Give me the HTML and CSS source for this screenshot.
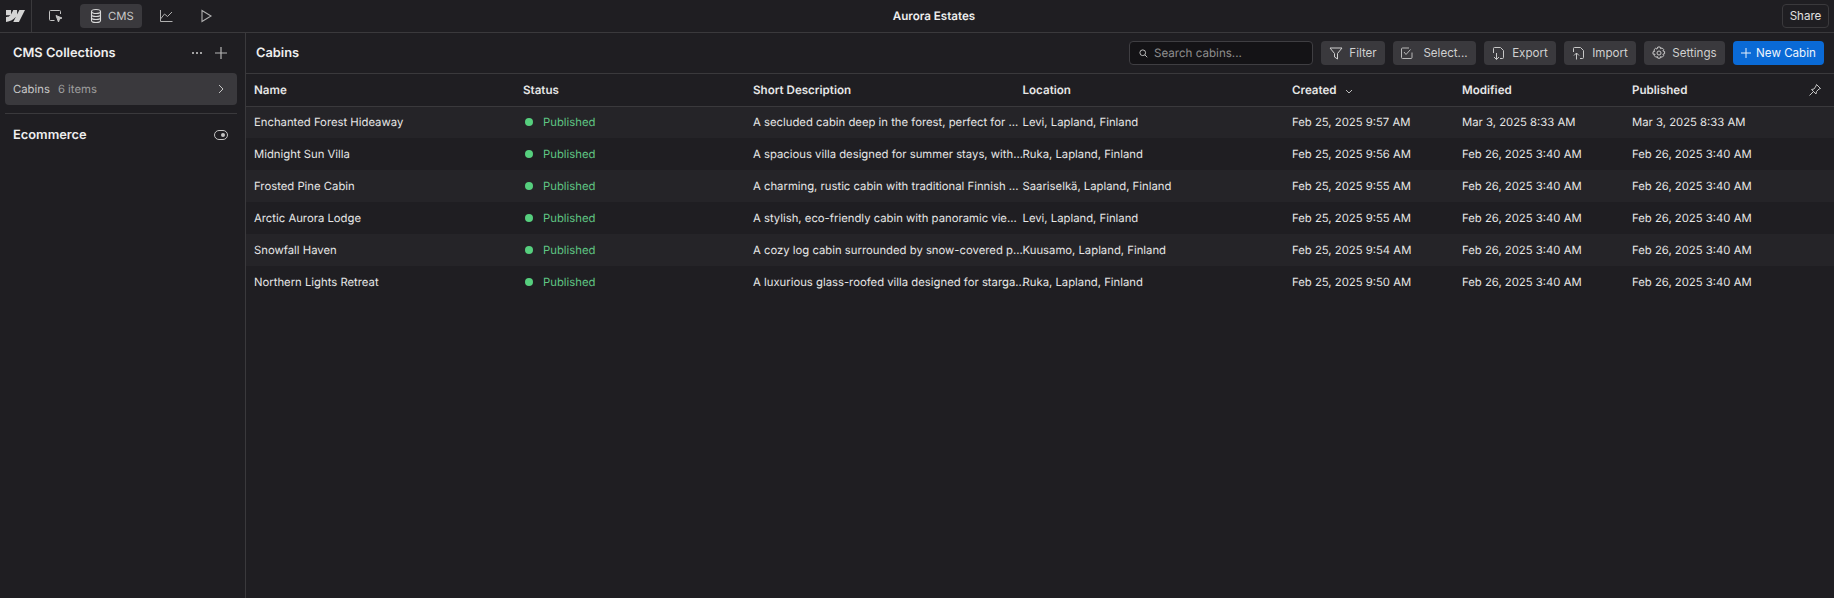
FILE: index.html
```html
<!DOCTYPE html>
<html lang="en">
<head>
<meta charset="utf-8">
<title>Aurora Estates</title>
<link rel="stylesheet" href="styles.css">
</head>
<body>
<header class="topbar">
  <div class="logo-cell">
    <svg class="logo" viewBox="0 0 1080 675" width="19" height="12"><path d="M1080 0 735.200 674.300H411.400l144.300-279.400h-6.500C430.200 549.500 252.700 651.300 0 674.300V398.700s161.700-9.600 256.800-109.500H0V0h288.500v237.300h6.500L412.900 0h218.200v235.800h6.500L760 0z" fill="#d4d4d4"/></svg>
  </div>
  <nav class="topnav">
    <span class="nav-icon"><svg viewBox="0 0 16 16" width="16" height="16" fill="none" stroke="#c4c4c4" stroke-width="1"><path d="M6.500 12.500H2.500a1 1 0 0 1-1-1v-8a1 1 0 0 1 1-1h9a1 1 0 0 1 1 1V6"/><path d="M8 7.500l6 2.500-2.500 1-1 3z" fill="#c4c4c4"/></svg></span>
    <span class="nav-item active"><svg viewBox="0 0 12 16" width="12" height="16" fill="none" stroke="#d9d9d9" stroke-width="1.100"><ellipse cx="6" cy="3.500" rx="4.500" ry="2"/><path d="M1.500 3.500v9c0 1.100 2 2 4.500 2s4.500-.9 4.500-2v-9M1.500 6.500c0 1.100 2 2 4.500 2s4.500-.9 4.500-2M1.500 9.500c0 1.100 2 2 4.500 2s4.500-.9 4.500-2"/></svg>CMS</span>
    <span class="nav-icon"><svg viewBox="0 0 16 16" width="16" height="16" fill="none" stroke="#b0b0b0" stroke-width="1"><path d="M2.500 2v11.500H14.500M2.500 11l4-5 3 2.500L14 4"/></svg></span>
    <span class="nav-icon"><svg viewBox="0 0 16 16" width="16" height="16" fill="none" stroke="#b0b0b0" stroke-width="1.100"><path d="M4 2.500v11l9-5.500z"/></svg></span>
  </nav>
  <div class="site-title">Aurora Estates</div>
  <button class="share">Share</button>
</header>
<div class="workspace">
  <aside class="sidebar">
    <div class="side-head">
      <h2>CMS Collections</h2>
      <svg class="dots" viewBox="0 0 12 4" width="12" height="4" fill="#cfcfcf"><circle cx="2" cy="2" r="1"/><circle cx="6" cy="2" r="1"/><circle cx="10" cy="2" r="1"/></svg>
      <svg class="plus" viewBox="0 0 12 12" width="12" height="12" stroke="#b5b5b5" stroke-width="1.200"><path d="M6 0v12M0 6h12"/></svg>
    </div>
    <div class="collection">
      <span class="coll-name">Cabins</span><span class="coll-count">6 items</span>
      <svg class="chev" viewBox="0 0 6 10" width="6" height="10" fill="none" stroke="#c4c4c4" stroke-width="1"><path d="M1 1l4 4-4 4"/></svg>
    </div>
    <div class="side-rule"></div>
    <div class="ecom">
      <h2>Ecommerce</h2>
      <svg viewBox="0 0 14 10" width="14" height="10" fill="none" stroke="#c4c4c4" stroke-width="1"><rect x=".5" y=".5" width="13" height="9" rx="4.500"/><circle cx="9" cy="5" r="2" fill="#c4c4c4" stroke="none"/></svg>
    </div>
  </aside>
  <main class="content">
    <div class="toolbar">
      <h1>Cabins</h1>
      <div class="search">
        <svg viewBox="0 0 12 12" width="9" height="9" fill="none" stroke="#bdbdbd" stroke-width="1.300"><circle cx="5" cy="5" r="3.800"/><path d="M8 8l3 3"/></svg>
        <span>Search cabins...</span>
      </div>
      <button class="btn w-filter"><svg viewBox="0 0 14 14" width="14" height="14" fill="none" stroke="#d0d0d0" stroke-width="1"><path d="M1 2h12L8.500 7.500V13L5.500 11V7.500z"/></svg>Filter</button>
      <button class="btn w-select"><svg viewBox="0 0 12 12" width="12" height="12" fill="none" stroke="#b8b8b8" stroke-width="1"><path d="M11 5.500v5a1 1 0 0 1-1 1H1.500a1 1 0 0 1-1-1V2a1 1 0 0 1 1-1H8"/><path d="M3 5l2 2.500L9.500 2.500"/></svg>Select...</button>
      <button class="btn w-export"><svg viewBox="0 0 14 14" width="14" height="14" fill="none" stroke="#c8c8c8" stroke-width="1"><path d="M1.500 7V2.500a1 1 0 0 1 1-1H8.500l3 3v7a1 1 0 0 1-1 1H8M4.500 7v6.500M2 11l2.500 2.500L7 11"/></svg>Export</button>
      <button class="btn w-import"><svg viewBox="0 0 14 14" width="14" height="14" fill="none" stroke="#c8c8c8" stroke-width="1"><path d="M1.500 6V2.500a1 1 0 0 1 1-1H8.500l3 3v7a1 1 0 0 1-1 1H8M4.500 13.500V7M2 9.500L4.500 7 7 9.500"/></svg>Import</button>
      <button class="btn w-settings"><svg viewBox="0 0 14 14" width="14" height="14" fill="none" stroke="#c8c8c8" stroke-width="1"><circle cx="7" cy="7" r="2"/><path d="M5.800 1h2.400l.4 1.700 1.500-.8 1.600 1.600-.8 1.500 1.700.4v2.400l-1.700.4.800 1.500-1.600 1.600-1.500-.8-.4 1.700H5.800l-.4-1.700-1.500.8-1.600-1.600.8-1.500L1 8.200V5.800l1.700-.4-.8-1.500 1.600-1.600 1.500.8z"/></svg>Settings</button>
      <button class="btn primary"><svg viewBox="0 0 10 10" width="10" height="10" stroke="#e8f1fb" stroke-width="1"><path d="M5 0v10M0 5h10"/></svg>New Cabin</button>
    </div>
    <table class="grid">
      <colgroup>
        <col class="c-name"><col class="c-status"><col class="c-desc"><col class="c-loc"><col class="c-date"><col class="c-date"><col class="c-date"><col class="c-pin">
      </colgroup>
      <thead>
        <tr>
          <th>Name</th><th>Status</th><th>Short Description</th><th>Location</th>
          <th>Created<svg class="sort" viewBox="0 0 8 5" width="8" height="5" fill="none" stroke="#bbb" stroke-width="1"><path d="M1 1l3 3 3-3"/></svg></th>
          <th>Modified</th><th>Published</th>
          <th class="pin"><svg viewBox="0 0 14 14" width="14" height="14" fill="none" stroke="#c4c4c4" stroke-width="1"><path d="M8.500 1.500l4 4-1.500.5-2.500 2.500-.5 2.500-4.500-4.500 2.500-.5L8 3zM5.500 8.500L1.500 12.500"/></svg></th>
        </tr>
      </thead>
      <tbody>
        <tr><td>Enchanted Forest Hideaway</td><td><span class="status">Published</span></td><td>A secluded cabin deep in the forest, perfect for ...</td><td>Levi, Lapland, Finland</td><td>Feb 25, 2025 9:57 AM</td><td>Mar 3, 2025 8:33 AM</td><td>Mar 3, 2025 8:33 AM</td><td></td></tr>
        <tr><td>Midnight Sun Villa</td><td><span class="status">Published</span></td><td>A spacious villa designed for summer stays, with...</td><td>Ruka, Lapland, Finland</td><td>Feb 25, 2025 9:56 AM</td><td>Feb 26, 2025 3:40 AM</td><td>Feb 26, 2025 3:40 AM</td><td></td></tr>
        <tr><td>Frosted Pine Cabin</td><td><span class="status">Published</span></td><td>A charming, rustic cabin with traditional Finnish ...</td><td>Saariselkä, Lapland, Finland</td><td>Feb 25, 2025 9:55 AM</td><td>Feb 26, 2025 3:40 AM</td><td>Feb 26, 2025 3:40 AM</td><td></td></tr>
        <tr><td>Arctic Aurora Lodge</td><td><span class="status">Published</span></td><td>A stylish, eco-friendly cabin with panoramic vie...</td><td>Levi, Lapland, Finland</td><td>Feb 25, 2025 9:55 AM</td><td>Feb 26, 2025 3:40 AM</td><td>Feb 26, 2025 3:40 AM</td><td></td></tr>
        <tr><td>Snowfall Haven</td><td><span class="status">Published</span></td><td>A cozy log cabin surrounded by snow-covered p...</td><td>Kuusamo, Lapland, Finland</td><td>Feb 25, 2025 9:54 AM</td><td>Feb 26, 2025 3:40 AM</td><td>Feb 26, 2025 3:40 AM</td><td></td></tr>
        <tr><td>Northern Lights Retreat</td><td><span class="status">Published</span></td><td>A luxurious glass-roofed villa designed for starga...</td><td>Ruka, Lapland, Finland</td><td>Feb 25, 2025 9:50 AM</td><td>Feb 26, 2025 3:40 AM</td><td>Feb 26, 2025 3:40 AM</td><td></td></tr>
      </tbody>
    </table>
  </main>
</div>
</body>
</html>
```
FILE: styles.css
```css
* { box-sizing: border-box; }
html, body { margin: 0; height: 100%; }
body {
  background: #1f1e22;
  color: #e6e6e6;
  font-family: Inter, "Liberation Sans", sans-serif;
  font-size: 11.3px;
  text-rendering: geometricPrecision;
  overflow: hidden;
}
h1, h2 { margin: 0; font-size: 12.85px; font-weight: 600; color: #eee; }
button { font-family: inherit; }

.topbar {
  height: 33px;
  display: flex;
  align-items: center;
  border-bottom: 1px solid #3a393c;
  position: relative;
}
.logo-cell {
  width: 32px;
  height: 32px;
  display: flex;
  align-items: center;
  justify-content: center;
  border-right: 1px solid #3a393c;
  flex: none;
}
.topnav { display: flex; align-items: center; padding-left: 8px; }
.nav-icon { width: 32px; height: 24px; display: flex; align-items: center; justify-content: center; margin-right: 8px; }
.nav-item {
  display: flex;
  align-items: center;
  gap: 6px;
  height: 24px;
  width: 62px;
  padding: 0 0 0 10px;
  border-radius: 4px;
  color: #c8c8c8;
  margin-right: 8px;
}
.nav-item.active { background: #3a393d; }
.site-title {
  position: absolute;
  left: 34px;
  right: 0;
  text-align: center;
  font-size: 11.6px;
  font-weight: 600;
  color: #eee;
  pointer-events: none;
}
.share {
  margin-left: auto;
  margin-right: 5px;
  height: 24px;
  width: 47px;
  padding: 0;
  background: none;
  border: 1px solid #3a393c;
  border-radius: 4px;
  color: #e0e0e0;
  font-size: 11.6px;
}

.workspace { display: flex; height: 565px; }
.sidebar { width: 246px; flex: none; border-right: 1px solid #3a393c; padding: 0 8px 0 5px; }
.side-head { height: 40px; display: flex; align-items: center; padding: 0 10px 0 8px; }
.side-head h2 { flex: 1; }
.plus { margin-left: 12px; }
.collection {
  height: 32px;
  display: flex;
  align-items: center;
  background: #3a393d;
  border-radius: 4px;
  padding: 0 13px 0 8px;
}
.coll-name { color: #c9c9c9; }
.coll-count { color: #9e9e9e; margin-left: 8px; flex: 1; }
.side-rule { height: 1px; background: #3a393c; margin-top: 8px; }
.ecom { height: 42px; display: flex; align-items: center; justify-content: space-between; padding: 0 9px 0 8px; }

.content { flex: 1; min-width: 0; }
.toolbar {
  height: 41px;
  display: flex;
  align-items: center;
  gap: 8px;
  padding: 0 10px 0 10px;
  border-bottom: 1px solid #3a393c;
}
.toolbar h1 { margin-right: auto; }
.search {
  width: 184px;
  height: 24px;
  display: flex;
  align-items: center;
  gap: 6px;
  padding: 0 9px;
  background: #141316;
  border: 1px solid #3f3e42;
  border-radius: 4px;
  color: #8f8f8f;
  font-size: 11.6px;
}
.btn {
  height: 24px;
  display: flex;
  align-items: center;
  justify-content: center;
  gap: 6px;
  padding: 0;
  background: #3a393d;
  border: none;
  border-radius: 4px;
  color: #d0d0d0;
  font-size: 11.6px;
}
.w-filter { width: 64px; }
.w-select { width: 83px; gap: 10px; }
.w-export { width: 72px; }
.w-import { width: 72px; }
.w-settings { width: 81px; }
.btn.primary { width: 91px; gap: 5px; background: #0a6ad6; color: #eef5fd; }

.grid { width: 100%; table-layout: fixed; border-collapse: collapse; }
.c-name { width: 269px; }
.c-status { width: 230px; }
.c-desc { width: 269.5px; }
.c-loc { width: 269.5px; }
.c-date { width: 170px; }
.grid th {
  height: 32px;
  padding: 0 8px;
  text-align: left;
  font-size: 11.6px;
  font-weight: 600;
  color: #e6e6e6;
  border-bottom: 1px solid #3a393c;
}
.grid th.pin { padding: 0 12px 0 0; text-align: right; }
.pin svg { vertical-align: middle; }
.sort { margin-left: 8px; }
.grid td {
  height: 32px;
  padding: 0 8px;
  white-space: nowrap;
  color: #e6e6e6;
}
.grid tbody tr:nth-child(odd) { background: #252428; }
.status {
  display: flex;
  align-items: center;
  gap: 10px;
  color: #5fc583;
}
.status::before {
  content: "";
  width: 8px;
  height: 8px;
  margin-left: 2px;
  border-radius: 50%;
  background: #56cf7e;
}
```
